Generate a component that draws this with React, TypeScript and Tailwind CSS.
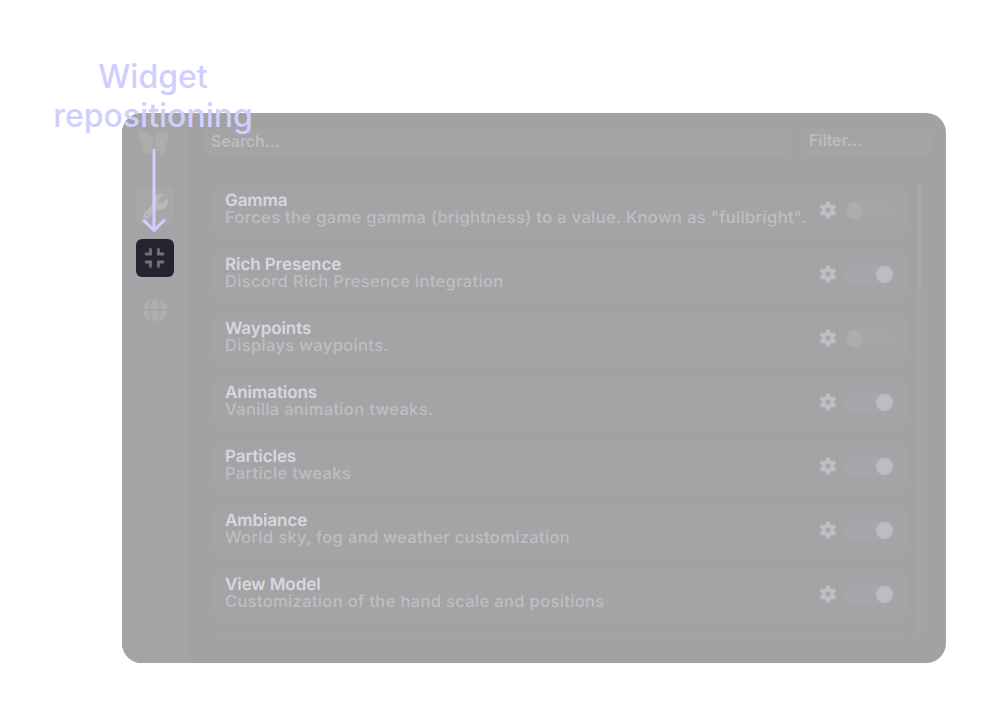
import React from "react";
import { FaWrench } from "react-icons/fa6";

type Feature = { name: string; description: string; enabled: boolean };

const features: Feature[] = [
  { name: "Gamma", description: 'Forces the game gamma (brightness) to a value. Known as "fullbright".', enabled: false },
  { name: "Rich Presence", description: "Discord Rich Presence integration", enabled: true },
  { name: "Waypoints", description: "Displays waypoints.", enabled: false },
  { name: "Animations", description: "Vanilla animation tweaks.", enabled: true },
  { name: "Particles", description: "Particle tweaks", enabled: true },
  { name: "Ambiance", description: "World sky, fog and weather customization", enabled: true },
  { name: "View Model", description: "Customization of the hand scale and positions", enabled: true },
];

function Butterfly() {
  return (
    <svg viewBox="0 0 32 25" className="-ml-0.5 h-[25px] w-8 fill-[#adadaf]">
      <path d="M1 3C.8 1.400 2 .8 4 1.200 9 2 14 4 15.300 8.500V15c-.5 3-2 7-4.500 8.500-3 1.200-6.500-.5-6.800-3.500-.1-2 1-3.500 2.800-4.500C2.500 14 1.200 8 1 3Z" />
      <path d="M31 3c.2-1.600-1-2.200-3-1.800C23 2 18 4 16.700 8.500V15c.5 3 2 7 4.500 8.500 3 1.200 6.500-.5 6.800-3.500.1-2-1-3.500-2.800-4.500C29.500 14 30.800 8 31 3Z" />
    </svg>
  );
}

function Compress() {
  return (
    <svg viewBox="0 0 22 22" className="size-[22px] fill-none stroke-[#71717c] stroke-[2.8]" strokeLinecap="round" strokeLinejoin="miter">
      <path d="M6.500 2.500v4.500H2M14.500 2.500v4.500H19M6.500 19.500V15H2M14.500 19.500V15H19" />
    </svg>
  );
}

function Globe() {
  return (
    <svg viewBox="0 0 24 24" className="size-6">
      <circle cx="12" cy="12" r="12" className="fill-[#aeaeb1]" />
      <path d="M0 12h24" className="fill-none stroke-[#a4a4a6] stroke-[1.7]" />
      <ellipse cx="12" cy="12" rx="5.300" ry="12.500" className="fill-none stroke-[#a4a4a6] stroke-[1.7]" />
    </svg>
  );
}

function Gear() {
  return (
    <svg viewBox="0 0 18 18" className="mr-[8px] -mt-0.5 size-[18px] shrink-0 fill-none stroke-[#bdbcc1]">
      <circle cx="9" cy="9" r="4.400" strokeWidth="4" />
      <path d="M9 .6V4M9 14v3.400M16.200 4.850l-2.870 1.650M1.800 13.150l2.870-1.650M1.800 4.850l2.870 1.650M16.200 13.150l-2.870-1.650" strokeWidth="4" />
    </svg>
  );
}

function Toggle({ on }: { on: boolean }) {
  return (
    <div className={on ? "-mt-px flex h-5 w-[50px] items-center justify-end rounded-[8px] bg-[#a6a6ab] pr-0.5" : "-mt-px flex h-5 w-[50px] items-center rounded-[8px] bg-[#a5a5a4] pl-px"}>
      <div className={on ? "size-[17px] rounded-full bg-[#bdbcc1]" : "size-[17px] rounded-full bg-[#adadaf]"} />
    </div>
  );
}

function FeatureCard({ feature }: { feature: Feature }) {
  return (
    <div className="flex h-[53px] shrink-0 items-center rounded-[9px] bg-[#a4a4a6] pr-3 pl-3">
      <div className="-mt-px flex w-[594px] shrink-0 flex-col whitespace-nowrap [text-rendering:geometricPrecision]">
        <span className="h-[17px] text-[17px] leading-[17px] font-semibold tracking-[-0.08px] text-[#d8d7df]">{feature.name}</span>
        <span className="h-[17px] text-[16.5px] leading-[15px] font-medium tracking-[0.35px] text-[#bebec1]">{feature.description}</span>
      </div>
      <Gear />
      <Toggle on={feature.enabled} />
    </div>
  );
}

export default function App() {
  return (
    <div className="relative h-[720px] w-[1000px] overflow-hidden bg-white pt-[113px] pl-[122px] font-['Inter',sans-serif]">
      <div className="flex h-[550px] w-[824px] overflow-hidden rounded-[20px] bg-[#a2a2a4]">
        <nav className="flex w-[66px] shrink-0 flex-col items-center bg-[#a4a4a6] pt-[17px]">
          <Butterfly />
          <div className="mt-8 flex size-[38px] items-center justify-center rounded-[6px] bg-[#a8a8ab]">
            <FaWrench className="size-[25px] text-[#b9b9bc]" />
          </div>
          <div className="mt-[14px] flex size-[38px] items-center justify-center rounded-[6px] bg-[#242430]">
            <Compress />
          </div>
          <div className="mt-[14px] flex size-[38px] items-center justify-center">
            <Globe />
          </div>
        </nav>
        <main className="flex grow flex-col pt-[14px] pl-[15px]">
          <div className="flex gap-[10px] text-[16px] font-semibold tracking-[-0.1px] text-[#bcbcbf]">
            <div className="h-[29px] w-[588px] rounded-[6px] bg-[#a4a4a6] pl-2 leading-[28px]">Search...</div>
            <div className="h-[29px] w-[130px] rounded-[6px] bg-[#a4a4a6] pl-2 leading-[27px]">Filter...</div>
          </div>
          <div className="mt-[27px] flex h-[455px]">
            <div className="ml-[10px] flex w-[694px] flex-col gap-[11px] overflow-hidden pt-px">
              {features.map((feature) => (
                <FeatureCard key={feature.name} feature={feature} />
              ))}
              <div className="h-[53px] shrink-0 rounded-[9px] bg-[#a4a4a6]" />
            </div>
            <div className="ml-[10px] w-[5px] overflow-hidden rounded-[2px] bg-[#a4a4a6]">
              <div className="h-[105px] rounded-[2px] bg-[#a9a9ab]" />
            </div>
          </div>
        </main>
      </div>
      <div className="absolute top-[57px] left-[3px] w-[300px] text-center text-[32px] leading-[39px] font-medium text-[#cfcffe]">
        Widget
        <br />
        repositioning
      </div>
      <svg viewBox="0 0 26 86" className="absolute top-[148px] left-[141px] h-[86px] w-[26px] fill-none stroke-[#cfcffe] stroke-3" strokeLinecap="round" strokeLinejoin="round">
        <path d="M13 2v80M3 72.500l10 10 10-10" />
      </svg>
    </div>
  );
}
